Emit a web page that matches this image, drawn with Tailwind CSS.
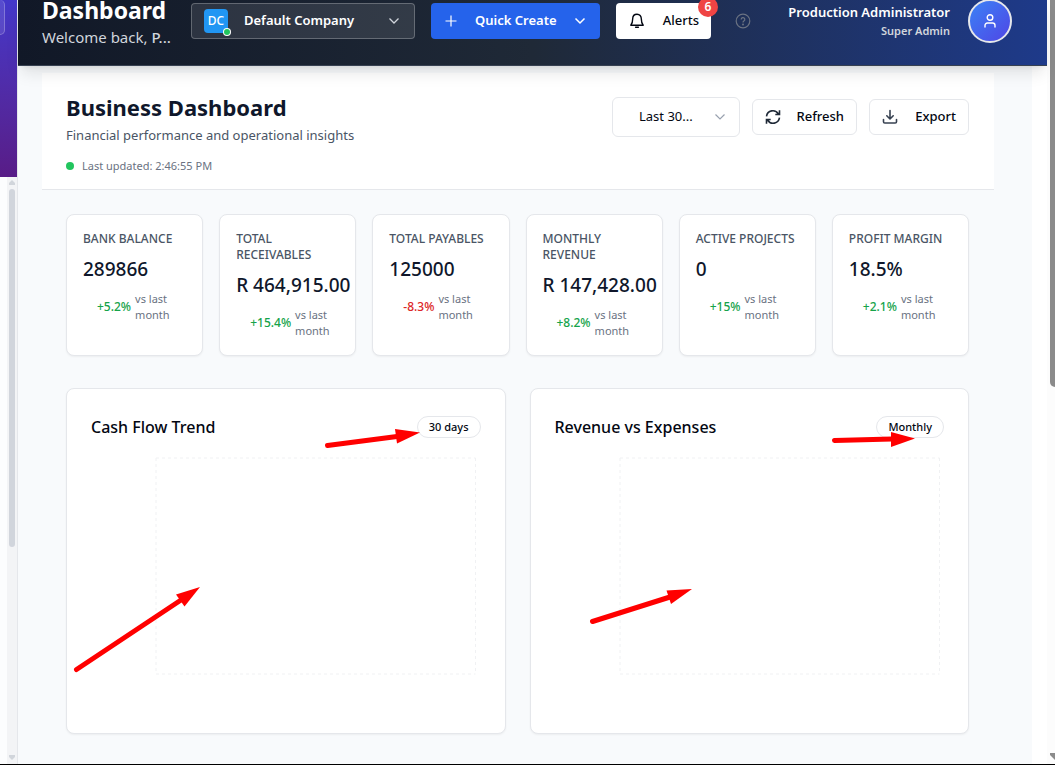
<!DOCTYPE html>
<html lang="en">
<head>
<meta charset="utf-8">
<meta name="viewport" content="width=device-width, initial-scale=1">
<title>Business Dashboard</title>
<script src="https://cdn.jsdelivr.net/npm/@tailwindcss/browser@4"></script>
</head>
<body class="relative flex h-screen flex-col overflow-hidden bg-white font-['Noto_Sans','Open_Sans',sans-serif] text-[13px] text-gray-950">
<div class="flex min-h-0 flex-1">

  <!-- Sidebar edge -->
  <aside class="relative z-10 flex w-[18px] shrink-0 flex-col border-r border-gray-200 bg-[#fcfdfe] shadow-2xl" aria-label="Sidebar">
    <div class="h-[177px] shrink-0 bg-linear-to-b from-[#4338ca] to-[#581c87]">
      <div class="h-[35px] w-[5px] rounded-r-md border-r border-b border-white/25 bg-white/10"></div>
    </div>
    <div class="flex min-h-0 flex-1 justify-end">
      <div class="flex w-[10px] flex-col items-center bg-gray-100 pt-[3px] pb-1">
        <svg class="h-[5px] w-[6px] shrink-0" viewBox="0 0 6 5" fill="#d1d5db"><path d="M3 0 6 3V5H0V3z"/></svg>
        <div class="mt-1 h-[358px] w-[6px] rounded-full bg-gray-300"></div>
        <svg class="mt-auto h-[5px] w-[6px] shrink-0" viewBox="0 0 6 5" fill="#d1d5db"><path d="M3 5 6 2V0H0V2z"/></svg>
      </div>
    </div>
  </aside>

  <div class="flex min-w-0 flex-1 flex-col">
    <!-- Top bar -->
    <header class="relative z-20 flex h-[66px] shrink-0 items-center gap-4 border-b border-[#374151] bg-linear-to-r/srgb from-[#111827] via-[#1f2937] to-[#1e3a8a] pr-[35px] pb-[23px] pl-6 shadow-lg">
      <div class="w-[133px] shrink-0 pt-[7px] whitespace-nowrap">
        <h1 class="text-[23px] leading-5 font-bold text-white">Dashboard</h1>
        <p class="mt-[5px] text-[15px] leading-6 text-gray-300">Welcome back, <span class="font-medium">P...</span></p>
      </div>
      <button type="button" aria-haspopup="listbox" class="flex h-9 w-56 shrink-0 items-center rounded border border-white/25 bg-white/10 px-3 font-semibold text-white">
        <span class="relative flex size-6 items-center justify-center rounded bg-[#2196f3] text-xs font-medium">DC
          <span class="absolute -right-[2px] -bottom-[2px] size-[6px] rounded-full bg-[#22c55e] ring-1 ring-white"></span>
        </span>
        <span class="ml-4">Default Company</span>
        <svg class="ml-auto size-4 text-gray-300" viewBox="0 0 16 16" fill="none" stroke="currentColor" stroke-width="1.3"><path d="m3.500 5.500 4.500 4.500 4.500-4.500"/></svg>
      </button>
      <button type="button" aria-haspopup="menu" class="flex h-9 w-[169px] shrink-0 items-center rounded bg-[#2563eb] px-3 font-semibold text-white">
        <svg class="size-4" viewBox="0 0 16 16" fill="none" stroke="currentColor" stroke-width="1.2"><path d="M8 2.500v11M2.500 8h11"/></svg>
        <span class="ml-4">Quick Create</span>
        <svg class="ml-auto size-4" viewBox="0 0 16 16" fill="none" stroke="currentColor" stroke-width="1.5"><path d="m3.500 5.500 4.500 4.500 4.500-4.500"/></svg>
      </button>
      <button type="button" class="relative flex h-9 w-[95px] shrink-0 items-center justify-between rounded bg-white px-3 font-medium">
        <svg class="size-[18px]" viewBox="0 0 18 18" fill="none" stroke="currentColor" stroke-width="1.400" stroke-linejoin="round" stroke-linecap="round"><path d="M9 2.200c-2.700 0-4.300 2-4.300 4.500 0 3.600-.7 5-1.900 6.500h12.400c-1.200-1.500-1.900-2.900-1.900-6.500C13.300 4.200 11.700 2.200 9 2.200zM7.600 15.200h2.800"/></svg>
        <span>Alerts</span>
        <span class="absolute -top-[6px] -right-[7px] flex size-5 items-center justify-center rounded-full bg-[#ef4444] text-xs font-semibold text-white">6</span>
      </button>
      <button type="button" aria-label="Help" class="ml-2 shrink-0 text-gray-500">
        <svg class="size-4" viewBox="0 0 16 16" fill="none" stroke="currentColor" stroke-width="1.200"><circle cx="8" cy="8" r="6.800"/><path d="M6.200 6.500a1.800 1.800 0 1 1 2.700 1.500c-.6.400-.9.700-.9 1.400"/><circle cx="8" cy="11.400" r=".4" fill="currentColor"/></svg>
      </button>
      <div class="ml-auto shrink-0 text-right whitespace-nowrap">
        <p class="leading-5 font-semibold text-white">Production Administrator</p>
        <p class="text-[11px] leading-[18px] font-semibold text-gray-300">Super Admin</p>
      </div>
      <button type="button" aria-label="Account" class="ml-[2px] flex size-11 shrink-0 items-center justify-center rounded-full border-2 border-gray-200 bg-linear-to-br/srgb from-[#3b82f6] to-[#4f46e5] text-white">
        <svg class="size-4" viewBox="0 0 16 16" fill="none" stroke="currentColor" stroke-width="1.400" stroke-linecap="round"><circle cx="8" cy="4.500" r="2.800"/><path d="M3 14v-1.600A2.400 2.400 0 0 1 5.400 10h5.200a2.400 2.400 0 0 1 2.400 2.400V14"/></svg>
      </button>
    </header>

    <main class="mr-[15px] min-h-0 flex-1 overflow-hidden bg-[#f8fafc] pt-[7px] pr-[38px] pl-6">
      <section class="flex items-start justify-between border-b border-gray-200 bg-white pt-[18px] pr-[25px] pb-[14px] pl-6">
        <div>
          <h2 class="text-[22px] leading-8 font-bold text-slate-900">Business Dashboard</h2>
          <p class="mt-[2px] leading-5 text-gray-600">Financial performance and operational insights</p>
          <p class="mt-3 flex items-center gap-2 text-[11px] leading-[18px] text-gray-500"><span class="size-2 rounded-full bg-[#22c55e]"></span>Last updated: 2:46:55 PM</p>
        </div>
        <div class="flex items-center gap-3 pt-[6px] font-medium">
          <div class="relative w-32">
            <select aria-label="Period" class="h-10 w-full appearance-none rounded-md border border-gray-200 bg-white pl-[26px] font-normal"><option>Last 30...</option></select>
            <svg class="pointer-events-none absolute top-3 right-3 size-4 text-gray-400" viewBox="0 0 16 16" fill="none" stroke="currentColor" stroke-width="1.200"><path d="m3.500 5.500 4.500 4.500 4.500-4.500"/></svg>
          </div>
          <button type="button" class="flex h-9 w-[105px] items-center justify-between rounded-md border border-gray-200 bg-white px-3">
            <svg class="size-4" viewBox="0 0 16 16" fill="none" stroke="#1f2937" stroke-width="1.600"><path d="M1.500 7.300A6.400 6.400 0 0 1 13.400 5M14.500 1.300V5.500H10.300M14.500 8.700A6.400 6.400 0 0 1 2.600 11M1.500 14.700v-4.200h4.200"/></svg>Refresh
          </button>
          <button type="button" class="flex h-9 w-[100px] items-center justify-between rounded-md border border-gray-200 bg-white px-3">
            <svg class="size-4" viewBox="0 0 16 16" fill="none" stroke="#374151" stroke-width="1.600" stroke-linecap="round" stroke-linejoin="round"><path d="M8 1.500v8.300M4.800 6.800 8 10l3.200-3.200M1.500 10.500v2.200q0 1.300 1.300 1.300h10.400q1.300 0 1.300-1.300v-2.200"/></svg>Export
          </button>
        </div>
      </section>

      <section aria-label="Key figures" class="mt-6 mr-[25px] ml-6 grid grid-cols-6 gap-4">
        <article class="min-w-0 rounded-lg border border-gray-200 bg-white p-4 shadow-xs">
          <h3 class="text-xs font-medium text-gray-600">BANK BALANCE</h3>
          <p class="mt-2 text-[19px] leading-7 font-medium whitespace-nowrap text-slate-900">289866</p>
          <p class="mt-2 ml-[14px] flex items-center gap-1 text-[11px] leading-4 text-gray-500"><span class="text-xs font-medium text-[#16a34a]">+5.2%</span><span>vs last month</span></p>
        </article>
        <article class="min-w-0 rounded-lg border border-gray-200 bg-white p-4 shadow-xs">
          <h3 class="text-xs font-medium text-gray-600">TOTAL RECEIVABLES</h3>
          <p class="mt-2 text-[19px] leading-7 font-medium whitespace-nowrap text-slate-900">R 464,915.00</p>
          <p class="mt-2 ml-[14px] flex items-center gap-1 text-[11px] leading-4 text-gray-500"><span class="text-xs font-medium text-[#16a34a]">+15.4%</span><span>vs last month</span></p>
        </article>
        <article class="min-w-0 rounded-lg border border-gray-200 bg-white p-4 shadow-xs">
          <h3 class="text-xs font-medium text-gray-600">TOTAL PAYABLES</h3>
          <p class="mt-2 text-[19px] leading-7 font-medium whitespace-nowrap text-slate-900">125000</p>
          <p class="mt-2 ml-[14px] flex items-center gap-1 text-[11px] leading-4 text-gray-500"><span class="text-xs font-medium text-[#dc2626]">-8.3%</span><span>vs last month</span></p>
        </article>
        <article class="min-w-0 rounded-lg border border-gray-200 bg-white p-4 shadow-xs">
          <h3 class="text-xs font-medium text-gray-600">MONTHLY REVENUE</h3>
          <p class="mt-2 text-[19px] leading-7 font-medium whitespace-nowrap text-slate-900">R 147,428.00</p>
          <p class="mt-2 ml-[14px] flex items-center gap-1 text-[11px] leading-4 text-gray-500"><span class="text-xs font-medium text-[#16a34a]">+8.2%</span><span>vs last month</span></p>
        </article>
        <article class="min-w-0 rounded-lg border border-gray-200 bg-white p-4 shadow-xs">
          <h3 class="text-xs font-medium whitespace-nowrap text-gray-600">ACTIVE PROJECTS</h3>
          <p class="mt-2 text-[19px] leading-7 font-medium whitespace-nowrap text-slate-900">0</p>
          <p class="mt-2 ml-[14px] flex items-center gap-1 text-[11px] leading-4 text-gray-500"><span class="text-xs font-medium text-[#16a34a]">+15%</span><span>vs last month</span></p>
        </article>
        <article class="min-w-0 rounded-lg border border-gray-200 bg-white p-4 shadow-xs">
          <h3 class="text-xs font-medium text-gray-600">PROFIT MARGIN</h3>
          <p class="mt-2 text-[19px] leading-7 font-medium whitespace-nowrap text-slate-900">18.5%</p>
          <p class="mt-2 ml-[14px] flex items-center gap-1 text-[11px] leading-4 text-gray-500"><span class="text-xs font-medium text-[#16a34a]">+2.1%</span><span>vs last month</span></p>
        </article>
      </section>

      <section aria-label="Charts" class="mt-8 mr-[25px] ml-6 grid grid-cols-2 gap-6">
        <article class="rounded-lg border border-gray-200 bg-white p-6 shadow-xs">
          <div class="flex h-7 items-center justify-between">
            <h3 class="text-base font-medium">Cash Flow Trend</h3>
            <span class="rounded-full border border-gray-200 px-[11px] py-[2px] text-[11px] leading-4 font-medium">30 days</span>
          </div>
          <div class="mt-3 h-64 pt-[5px] pr-[5px] pb-[35px] pl-[65px]">
            <svg class="size-full overflow-visible" stroke="#f0f1f3" stroke-dasharray="3 3"><line x2="100%"/><line y1="100%" x2="100%" y2="100%"/><line y2="100%"/><line x1="100%" x2="100%" y2="100%"/></svg>
          </div>
        </article>
        <article class="rounded-lg border border-gray-200 bg-white p-6 shadow-xs">
          <div class="flex h-7 items-center justify-between">
            <h3 class="text-base font-medium">Revenue vs Expenses</h3>
            <span class="rounded-full border border-gray-200 px-[11px] py-[2px] text-[11px] leading-4 font-medium">Monthly</span>
          </div>
          <div class="mt-3 h-64 pt-[5px] pr-[5px] pb-[35px] pl-[65px]">
            <svg class="size-full overflow-visible" stroke="#f0f1f3" stroke-dasharray="3 3"><line x2="100%"/><line y1="100%" x2="100%" y2="100%"/><line y2="100%"/><line x1="100%" x2="100%" y2="100%"/></svg>
          </div>
        </article>
      </section>
    </main>
  </div>

  <!-- Page scrollbar -->
  <div class="flex w-2 shrink-0 flex-col justify-between bg-[#fcfcfc] pl-[3px]">
    <div class="h-[387px] rounded-bl-md bg-[#8b8b8b]"></div>
    <svg class="mb-1 h-[7px] w-[5px]" viewBox="0 0 5 7" fill="#8b8b8b"><path d="M0 0h5v7L0 2z"/></svg>
  </div>
</div>
<div class="h-px shrink-0 bg-black"></div>

<!-- Annotation arrows -->
<svg class="pointer-events-none absolute top-0 left-0 z-30 h-[765px] w-[1055px]" viewBox="0 0 1055 765" fill="red" stroke="red" stroke-width="5" stroke-linecap="round" aria-hidden="true">
  <path d="M327.500 445.500 397 436.500"/><path stroke="none" d="m395 429 25 3.500-23 11z"/>
  <path d="M834.500 440.500 892 439"/><path stroke="none" d="m891 432 24 6.500-24 8.500z"/>
  <path d="M76.500 669.500 181 600"/><path stroke="none" d="m176 594.500 24-7.500-15.500 19.500z"/>
  <path d="M592.500 621.500 670 597"/><path stroke="none" d="m666.500 590.500 25.500-1.500-21 15z"/>
</svg>
</body>
</html>
